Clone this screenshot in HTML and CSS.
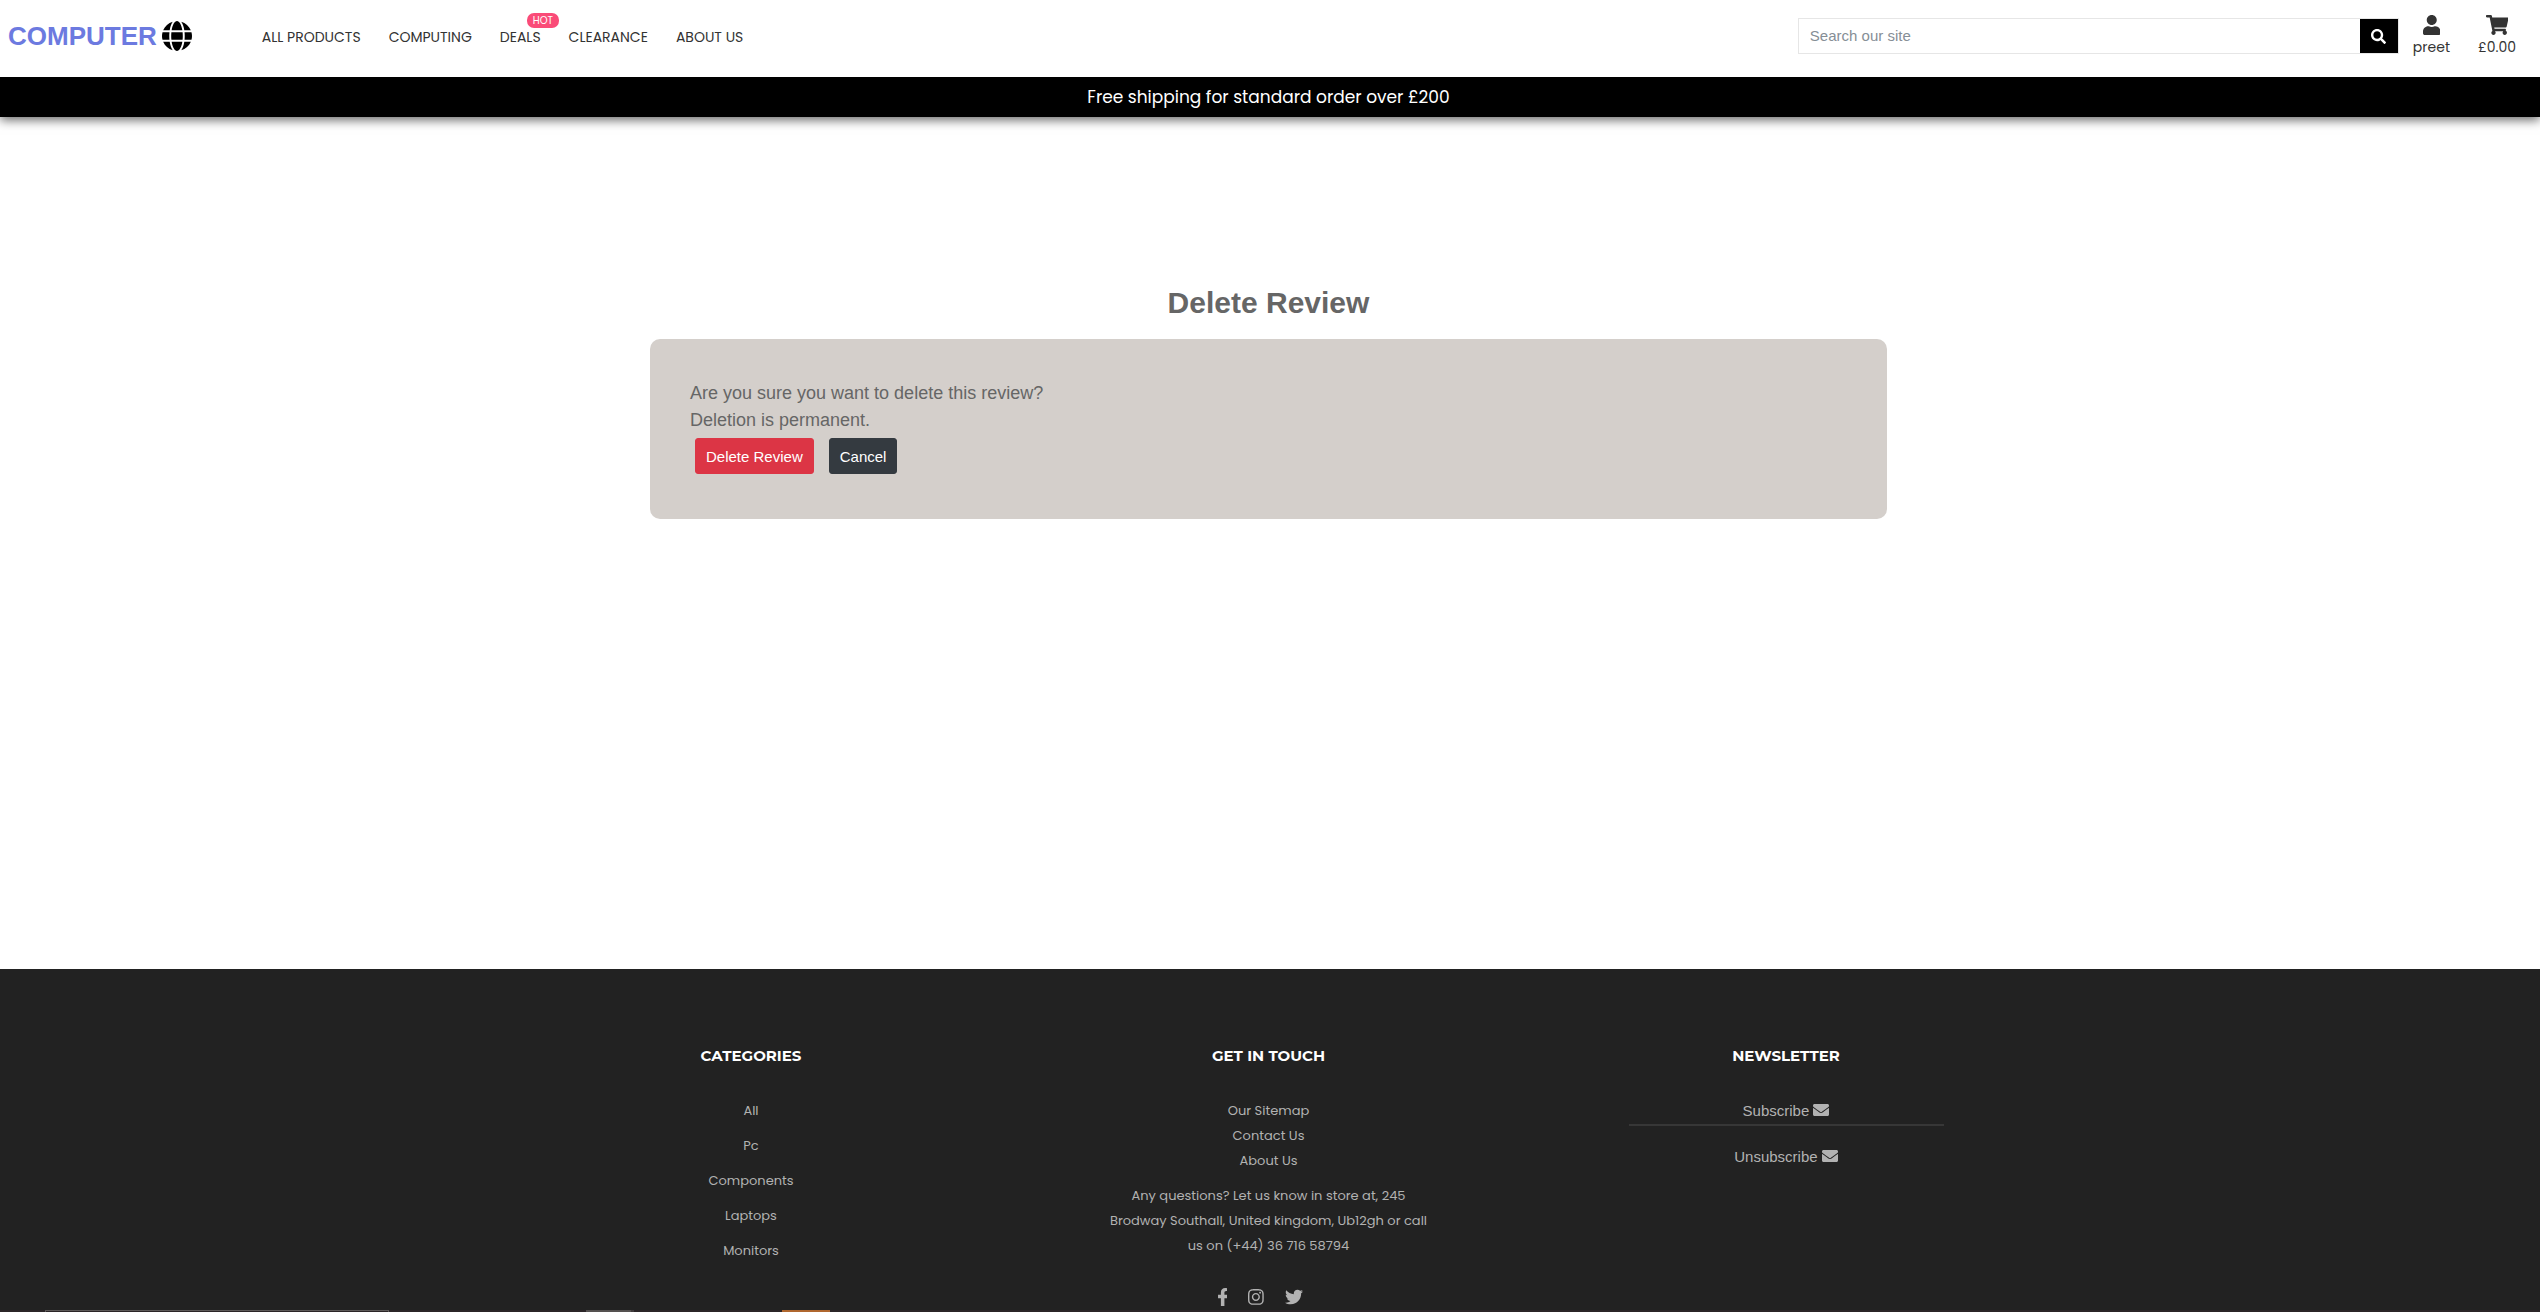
FILE: index.html
```html
<!DOCTYPE html>
<html lang="en">
<head>
<meta charset="utf-8">
<meta name="viewport" content="width=device-width, initial-scale=1">
<title>Computer World - Delete Review</title>
<link rel="stylesheet" href="styles.css">
</head>
<body>
<header class="site-header">
  <div class="topbar">
    <a class="logo" href="#" aria-label="Computer World">COMPUTER
      <svg class="logo-globe" viewBox="0 8 496 496" aria-hidden="true"><path d="M336.500 160C322 70.700 287.800 8 248 8s-74 62.700-88.500 152h177zM152 256c0 22.200 1.200 43.500 3.300 64h185.300c2.100-20.500 3.300-41.800 3.300-64s-1.200-43.500-3.300-64H155.300c-2.100 20.500-3.300 41.800-3.300 64zm324.700-96c-28.600-67.900-86.500-120.400-158-141.600 24.400 33.800 41.200 84.700 50 141.600h108zM177.200 18.400C105.800 39.600 47.800 92.100 19.300 160h108c8.700-56.900 25.500-107.800 49.900-141.600zM487.400 192H372.700c2.100 21 3.300 42.500 3.300 64s-1.200 43-3.300 64h114.600c5.500-20.500 8.600-41.800 8.600-64s-3.100-43.500-8.500-64zM120 256c0-21.500 1.200-43 3.300-64H8.600C3.200 212.500 0 233.800 0 256s3.200 43.500 8.600 64h114.600c-2-21-3.200-42.500-3.200-64zm39.500 96c14.500 89.300 48.700 152 88.500 152s74-62.700 88.500-152h-177zm159.300 141.600c71.400-21.200 129.400-73.700 158-141.600h-108c-8.800 56.900-25.600 107.800-50 141.600zM19.300 352c28.600 67.900 86.500 120.400 158 141.600-24.400-33.800-41.200-84.700-50-141.600h-108z"/></svg>
    </a>
    <nav class="main-nav">
      <a href="#">ALL PRODUCTS</a>
      <a href="#">COMPUTING</a>
      <a href="#" class="has-badge">DEALS<span class="badge">HOT</span></a>
      <a href="#">CLEARANCE</a>
      <a href="#">ABOUT US</a>
    </nav>
    <form class="search">
      <input type="text" placeholder="Search our site" aria-label="Search our site">
      <button type="submit" aria-label="Search"><svg viewBox="0 0 512 512" aria-hidden="true"><path d="M505 442.700L405.300 343c-4.500-4.500-10.600-7-17-7H372c27.600-35.300 44-79.700 44-128C416 93.100 322.900 0 208 0S0 93.100 0 208s93.100 208 208 208c48.300 0 92.700-16.400 128-44v16.300c0 6.400 2.500 12.500 7 17l99.700 99.700c9.400 9.400 24.600 9.400 33.900 0l28.300-28.300c9.400-9.400 9.400-24.600.1-34zM208 336c-70.700 0-128-57.200-128-128 0-70.700 57.200-128 128-128 70.700 0 128 57.200 128 128 0 70.700-57.200 128-128 128z"/></svg></button>
    </form>
    <div class="account">
      <a href="#"><svg viewBox="0 0 448 512" aria-hidden="true"><path d="M224 256c70.700 0 128-57.300 128-128S294.700 0 224 0 96 57.300 96 128s57.300 128 128 128zm89.600 32h-16.700c-22.200 10.200-46.900 16-72.900 16s-50.600-5.800-72.900-16h-16.700C60.200 288 0 348.200 0 422.400V464c0 26.500 21.500 48 48 48h352c26.500 0 48-21.500 48-48v-41.600c0-74.200-60.200-134.400-134.400-134.400z"/></svg>preet</a>
      <a href="#"><svg viewBox="0 0 576 512" aria-hidden="true"><path d="M528.120 301.319l47.273-208C578.806 78.301 567.391 64 551.990 64H159.208l-9.166-44.810C147.758 8.021 137.930 0 126.529 0H24C10.745 0 0 10.745 0 24v16c0 13.255 10.745 24 24 24h69.883l70.248 343.435C147.325 417.100 136 435.222 136 456c0 30.928 25.072 56 56 56s56-25.072 56-56c0-15.674-6.447-29.835-16.824-40h209.647C430.447 426.165 424 440.326 424 456c0 30.928 25.072 56 56 56s56-25.072 56-56c0-22.172-12.888-41.332-31.579-50.405l5.517-24.276c3.413-15.018-8.002-29.319-23.403-29.319H218.117l-6.545-32h293.145c11.206 0 20.920-7.754 23.403-18.681z"/></svg>£0.00</a>
    </div>
  </div>
  <p class="promo">Free shipping for standard order over £200</p>
</header>

<main class="content">
  <h1>Delete Review</h1>
  <section class="card">
    <p>Are you sure you want to delete this review?<br>Deletion is permanent.</p>
    <div class="actions">
      <button type="button" class="btn btn-danger">Delete Review</button>
      <button type="button" class="btn btn-dark">Cancel</button>
    </div>
  </section>
</main>

<footer class="site-footer">
  <div class="footer-columns">
    <section>
      <h2>CATEGORIES</h2>
      <ul class="categories">
        <li><a href="#">All</a></li>
        <li><a href="#">Pc</a></li>
        <li><a href="#">Components</a></li>
        <li><a href="#">Laptops</a></li>
        <li><a href="#">Monitors</a></li>
      </ul>
    </section>
    <section>
      <h2>GET IN TOUCH</h2>
      <ul class="contact">
        <li><a href="#">Our Sitemap</a></li>
        <li><a href="#">Contact Us</a></li>
        <li><a href="#">About Us</a></li>
      </ul>
      <p class="address">Any questions? Let us know in store at, 245 Brodway Southall, United kingdom, Ub12gh or call us on (+44) 36 716 58794</p>
      <div class="social">
        <a href="#" aria-label="Facebook"><svg viewBox="22 0 276 512" aria-hidden="true"><path d="M279.140 288l14.220-92.660h-88.910v-60.130c0-25.350 12.420-50.060 52.240-50.060h40.420V6.260S260.430 0 225.360 0c-73.220 0-121.080 44.380-121.080 124.720v70.620H22.890V288h81.390v224h100.170V288z"/></svg></a>
        <a href="#" aria-label="Instagram"><svg viewBox="0 0 448 512" aria-hidden="true"><path d="M224.100 141c-63.600 0-114.900 51.300-114.900 114.900s51.300 114.900 114.900 114.900S339 319.500 339 255.900 287.700 141 224.100 141zm0 189.600c-41.100 0-74.700-33.500-74.700-74.700s33.500-74.700 74.700-74.700 74.700 33.500 74.700 74.700-33.600 74.700-74.700 74.700zm146.400-194.300c0 14.900-12 26.800-26.800 26.800-14.900 0-26.800-12-26.800-26.800s12-26.800 26.800-26.800 26.800 12 26.800 26.800zm76.100 27.200c-1.700-35.900-9.900-67.700-36.200-93.900-26.200-26.200-58-34.400-93.900-36.200-37-2.100-147.900-2.100-184.900 0-35.800 1.700-67.600 9.900-93.900 36.100s-34.400 58-36.200 93.900c-2.100 37-2.100 147.900 0 184.900 1.700 35.900 9.900 67.700 36.200 93.900s58 34.400 93.900 36.200c37 2.100 147.900 2.100 184.900 0 35.900-1.700 67.700-9.900 93.900-36.200 26.200-26.200 34.400-58 36.200-93.900 2.100-37 2.100-147.800 0-184.800zM398.800 388c-7.800 19.600-22.900 34.700-42.600 42.600-29.500 11.700-99.500 9-132.100 9s-102.700 2.600-132.100-9c-19.600-7.800-34.700-22.900-42.600-42.600-11.700-29.500-9-99.500-9-132.100s-2.600-102.700 9-132.100c7.800-19.600 22.900-34.700 42.600-42.600 29.500-11.700 99.500-9 132.100-9s102.700-2.600 132.100 9c19.600 7.800 34.700 22.900 42.600 42.600 11.700 29.500 9 99.500 9 132.100s2.700 102.700-9 132.100z"/></svg></a>
        <a href="#" aria-label="Twitter"><svg viewBox="0 0 512 512" aria-hidden="true"><path d="M459.370 151.716c.325 4.548.325 9.097.325 13.645 0 138.720-105.583 298.558-298.558 298.558-59.452 0-114.680-17.219-161.137-47.106 8.447.974 16.568 1.299 25.340 1.299 49.055 0 94.213-16.568 130.274-44.832-46.132-.975-84.792-31.188-98.112-72.772 6.498.974 12.995 1.624 19.818 1.624 9.421 0 18.843-1.300 27.614-3.573-48.081-9.747-84.143-51.980-84.143-102.985v-1.299c13.969 7.797 30.214 12.670 47.431 13.319-28.264-18.843-46.781-51.005-46.781-87.391 0-19.492 5.197-37.360 14.294-52.954 51.655 63.675 129.300 105.258 216.365 109.807-1.624-7.797-2.599-15.918-2.599-24.040 0-57.828 46.782-104.934 104.934-104.934 30.213 0 57.502 12.670 76.670 33.137 23.715-4.548 46.456-13.320 66.599-25.340-7.798 24.366-24.366 44.833-46.132 57.827 21.117-2.273 41.584-8.122 60.426-16.243-14.292 20.791-32.161 39.308-52.628 54.253z"/></svg></a>
      </div>
    </section>
    <section>
      <h2>NEWSLETTER</h2>
      <ul class="newsletter">
        <li><a href="#">Subscribe <svg viewBox="0 64 512 384" aria-hidden="true"><path d="M502.300 190.800c3.900-3.100 9.700-.2 9.700 4.700V400c0 26.500-21.500 48-48 48H48c-26.500 0-48-21.500-48-48V195.600c0-5 5.700-7.800 9.700-4.700 22.400 17.400 52.100 39.500 154.100 113.600 21.100 15.400 56.700 47.800 92.200 47.600 35.700.3 72-32.800 92.300-47.600 102-74.100 131.600-96.300 154-113.700zM256 320c23.200.4 56.600-29.200 73.400-41.400 132.700-96.300 142.800-104.700 173.400-128.700 5.800-4.500 9.200-11.500 9.200-18.900v-19c0-26.500-21.500-48-48-48H48c-26.500 0-48 21.500-48 48v19c0 7.400 3.400 14.300 9.200 18.900 30.600 23.900 40.700 32.400 173.400 128.700 16.800 12.200 50.200 41.800 73.400 41.400z"/></svg></a></li>
        <li><a href="#">Unsubscribe <svg viewBox="0 64 512 384" aria-hidden="true"><path d="M502.300 190.800c3.900-3.100 9.700-.2 9.700 4.700V400c0 26.500-21.500 48-48 48H48c-26.500 0-48-21.500-48-48V195.600c0-5 5.700-7.800 9.700-4.700 22.400 17.400 52.100 39.500 154.100 113.600 21.100 15.400 56.700 47.800 92.200 47.600 35.700.3 72-32.800 92.300-47.600 102-74.100 131.600-96.300 154-113.700zM256 320c23.200.4 56.600-29.200 73.400-41.400 132.700-96.300 142.800-104.700 173.400-128.700 5.800-4.500 9.200-11.500 9.200-18.900v-19c0-26.500-21.500-48-48-48H48c-26.500 0-48 21.500-48 48v19c0 7.400 3.400 14.300 9.200 18.900 30.600 23.900 40.700 32.400 173.400 128.700 16.800 12.200 50.200 41.800 73.400 41.400z"/></svg></a></li>
      </ul>
    </section>
  </div>
  <div class="bottom-strip" aria-hidden="true">
    <span class="strip-field"></span>
    <span class="strip-tab"></span>
    <span class="strip-active"></span>
  </div>
</footer>
</body>
</html>
```

FILE: styles.css
```css
* {
  box-sizing: border-box;
}

:root {
  --display: "Poppins", "Inter", sans-serif;
  --body: "Liberation Sans", Arial, sans-serif;
  --muted: #b2b2b2;
  --edge: 3px;
}

body {
  margin: 0;
  min-height: 100vh;
  display: flex;
  flex-direction: column;
  background: #fff;
  color: #666;
  font-family: var(--body);
  font-size: 15px;
  line-height: 24px;
}

a {
  color: inherit;
  text-decoration: none;
}

h1,
h2,
p,
ul {
  margin: 0;
  padding: 0;
}

ul {
  list-style: none;
}

svg {
  fill: currentColor;
}

button {
  font: inherit;
  cursor: pointer;
}

/* Header */
.site-header {
  box-shadow: 0 3px 10px rgba(0, 0, 0, 0.6);
}

.topbar {
  display: flex;
  align-items: flex-start;
  height: 77px;
  padding: 0 24px 0 8px;
  color: #333;
}

.logo {
  display: flex;
  align-items: center;
  gap: 5px;
  height: 72px;
  margin-right: 70px;
  color: #6c7ae0;
  font-size: 26px;
  font-weight: 700;
}

.logo-globe {
  width: 30px;
  height: 30px;
  color: #000;
}

.main-nav {
  display: flex;
  align-items: center;
  gap: 28px;
  height: 74px;
  font-family: var(--display);
  font-size: 14px;
  font-weight: 400;
  white-space: nowrap;
}

.has-badge {
  position: relative;
}

.badge {
  position: absolute;
  top: -12px;
  left: 27px;
  padding: 0 6px;
  border-radius: 7px;
  background: #fa4b78;
  color: #fff;
  font-size: 10px;
  line-height: 15px;
}

.search {
  display: flex;
  width: 601px;
  height: 36px;
  margin: 18px 14px 0 auto;
  border: 1px solid #e6e6e6;
}

.search input {
  flex: 1;
  min-width: 0;
  padding: 0 11px;
  border: 0;
  font: inherit;
}

.search input::placeholder {
  color: #868e96;
  opacity: 1;
}

.search button {
  display: flex;
  align-items: center;
  justify-content: center;
  width: 38px;
  padding: 0;
  border: 0;
  background: #000;
  color: #fff;
}

.search svg {
  width: 15px;
  height: 15px;
}

.account {
  display: flex;
  gap: 28px;
  padding-top: 15px;
  font-family: var(--display);
  font-size: 14px;
}

.account a {
  display: flex;
  flex-direction: column;
  align-items: center;
}

.account svg {
  height: 20px;
}

.promo {
  padding-right: var(--edge);
  background: #000;
  color: #fff;
  font-family: var(--display);
  font-size: 17px;
  line-height: 40px;
  text-align: center;
}

/* Delete review */
.content {
  flex: 1 0 auto;
  width: 100%;
  max-width: 1240px;
  min-height: 852px;
  margin: 0 auto;
  padding: 168px var(--edge) 0 0;
}

h1 {
  margin-bottom: 18px;
  font-size: 30px;
  line-height: 36px;
  text-align: center;
}

.card {
  padding: 41px 40px 45px;
  border-radius: 10px;
  background: #d4cfcb;
  font-size: 18px;
  line-height: 27px;
}

.actions {
  display: flex;
  gap: 15px;
  margin: 4px 5px 0;
}

.btn {
  height: 36px;
  padding: 0 10px;
  border: 1px solid transparent;
  border-radius: 3px;
  color: #fff;
  font-size: 15px;
}

.btn-danger {
  background-color: #dc3545;
  border-color: #dc3545;
}

.btn-dark {
  background-color: #343a40;
  border-color: #343a40;
}

/* Footer */
.site-footer {
  padding-top: 75px;
  background: #222;
  color: var(--muted);
  text-align: center;
}

.footer-columns {
  display: grid;
  grid-template-columns: repeat(3, 315px);
  justify-content: space-between;
  max-width: 1353px;
  margin: 0 auto;
  padding-right: var(--edge);
  font-family: var(--display);
  font-size: 13px;
  line-height: 25px;
}

h2 {
  margin-bottom: 30px;
  color: #fff;
  font-family: "Montserrat", "Inter", sans-serif;
  font-size: 15px;
  font-weight: 700;
  line-height: 24px;
}

.categories,
.contact {
  margin-bottom: 10px;
}

.categories {
  display: grid;
  gap: 10px;
}

.address {
  margin: 0 -4px;
}

.social {
  display: flex;
  align-items: center;
  justify-content: center;
  gap: 21px;
  margin-top: 30px;
  padding-right: 16px;
}

.social a {
  display: flex;
}

.social svg {
  height: 18px;
}

.newsletter {
  font-family: var(--body);
  font-size: 15px;
}

.newsletter li:first-child {
  height: 28px;
  margin-bottom: 18px;
  border-bottom: 2px solid #373737;
}

.newsletter svg {
  width: 16px;
  height: 12px;
}

.bottom-strip {
  display: flex;
  height: 2px;
  margin-top: 4px;
  padding-left: 45px;
  background: #2b2527;
}

.strip-field {
  width: 344px;
  margin-right: 197px;
  border: 1px solid #5c5857;
  border-bottom: 0;
}

.strip-tab {
  width: 48px;
  margin-right: 148px;
  background: #555150;
  border-right: 3px solid #403b3c;
}

.strip-active {
  width: 48px;
  background: #b0672f;
}
```
